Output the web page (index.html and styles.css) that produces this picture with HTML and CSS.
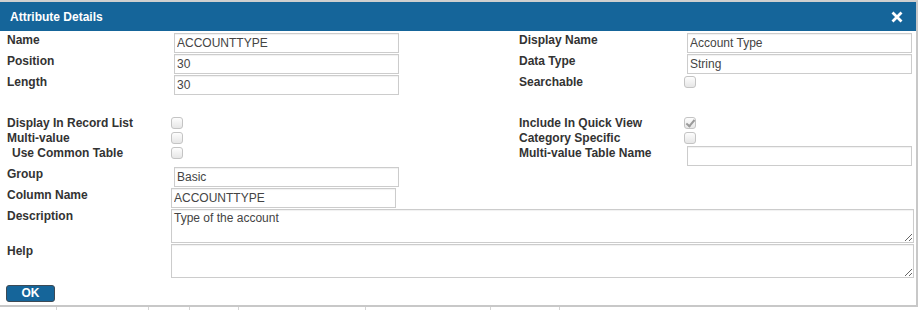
FILE: index.html
```html
<!DOCTYPE html>
<html lang="en">
<head>
  <meta charset="UTF-8">
  <meta name="viewport" content="width=device-width, initial-scale=1.0">
  <title>Attribute Details</title>
  <link rel="stylesheet" href="styles.css">
</head>
<body>

  <div class="dialog">
    <div class="dialog-header">
      <span class="dialog-title">Attribute Details</span>
      <span class="close">
        <svg width="12" height="12" viewBox="0 0 12 12">
          <path d="M1.5 1.5 L10.5 10.5 M10.5 1.5 L1.5 10.5" stroke="#fff" stroke-width="2.8" fill="none"/>
        </svg>
      </span>
    </div>

    <form class="dialog-body" onsubmit="return false">
      <div class="row">
        <label>Name</label>
        <div><input type="text" class="field" value="ACCOUNTTYPE"></div>
        <label>Display Name</label>
        <div><input type="text" class="field" value="Account Type"></div>
      </div>
      <div class="row">
        <label>Position</label>
        <div><input type="text" class="field" value="30"></div>
        <label>Data Type</label>
        <div><input type="text" class="field" value="String"></div>
      </div>
      <div class="row">
        <label>Length</label>
        <div><input type="text" class="field" value="30"></div>
        <label>Searchable</label>
        <div><input type="checkbox" class="check"></div>
      </div>

      <div class="spacer"></div>

      <div class="row short">
        <label>Display In Record List</label>
        <div><input type="checkbox" class="check"></div>
        <label>Include In Quick View</label>
        <div><input type="checkbox" class="check" checked disabled></div>
      </div>
      <div class="row short">
        <label>Multi-value</label>
        <div><input type="checkbox" class="check"></div>
        <label>Category Specific</label>
        <div><input type="checkbox" class="check"></div>
      </div>
      <div class="row">
        <label class="indent">Use Common Table</label>
        <div><input type="checkbox" class="check"></div>
        <label>Multi-value Table Name</label>
        <div><input type="text" class="field" value=""></div>
      </div>
      <div class="row">
        <label>Group</label>
        <div><input type="text" class="field" value="Basic"></div>
      </div>
      <div class="row">
        <label>Column Name</label>
        <div><input type="text" class="field flush" value="ACCOUNTTYPE"></div>
      </div>
      <div class="row tall">
        <label>Description</label>
        <div class="wide"><textarea class="area">Type of the account</textarea></div>
      </div>
      <div class="row tall">
        <label>Help</label>
        <div class="wide"><textarea class="area"></textarea></div>
      </div>

      <div class="actions">
        <button type="submit" class="btn">OK</button>
      </div>
    </form>
  </div>

  <!-- grid of the list behind the dialog -->
  <div class="behind">
    <span style="width:57px"></span>
    <span style="width:92px"></span>
    <span style="width:41px"></span>
    <span style="width:49px"></span>
    <span style="width:127px"></span>
    <span style="width:125px"></span>
    <span style="width:69px"></span>
  </div>

</body>
</html>
```

FILE: styles.css
```css
body {
  font-family: "Liberation Sans", Arial, sans-serif;
  background-color: #fff;
  margin: 0;
  padding: 0;
  overflow: hidden;
}
.dialog {
  width: 916px;
  border-top: 2px solid #cfcfcf;
  border-right: 2px solid #c8c8c8;
  border-bottom: 2px solid #c8c8c8;
  background-color: #fff;
}
.dialog-header {
  height: 29px;
  background-color: #15659a;
  display: flex;
  align-items: center;
  justify-content: space-between;
  padding: 0 13px 0 10px;
}
.dialog-title {
  color: #fff;
  font-size: 12px;
  font-weight: bold;
}
.close {
  display: flex;
  margin-top: 1px;
  cursor: pointer;
}
.dialog-body {
  height: 274px;
  box-sizing: border-box;
  padding: 2px 3px 0 7px;
}
.row {
  display: grid;
  grid-template-columns: 164px 348px 165px 229px;
  height: 21px;
  align-items: start;
}
.row.short {
  height: 15px;
}
.row.tall {
  height: 35px;
}
.row label {
  font-size: 12px;
  font-weight: bold;
  color: #333;
  line-height: 14px;
  white-space: nowrap;
}
.row label.indent {
  padding-left: 5px;
}
.spacer {
  height: 20px;
}
.wide {
  grid-column: 2 / 5;
}
.field {
  box-sizing: border-box;
  width: 225px;
  height: 20px;
  margin: 0 0 0 3px;
  padding: 0 2px;
  border: 1px solid #ccc;
  box-shadow: inset 0 1px 1px rgba(0, 0, 0, 0.06);
  font-family: "Liberation Sans", Arial, sans-serif;
  font-size: 12px;
  color: #444;
  outline: none;
}
.field.flush {
  margin-left: 0;
}
.area {
  display: block;
  box-sizing: border-box;
  width: 743px;
  height: 34px;
  margin: 0;
  padding: 1px 2px;
  border: 1px solid #ccc;
  box-shadow: inset 0 1px 1px rgba(0, 0, 0, 0.06);
  font-family: "Liberation Sans", Arial, sans-serif;
  font-size: 12px;
  color: #444;
  outline: none;
}
.check {
  appearance: none;
  -webkit-appearance: none;
  position: relative;
  box-sizing: border-box;
  width: 12px;
  height: 12px;
  margin: 1px 0 0 0;
  border: 1px solid #c4c4c4;
  border-radius: 3px;
  background: linear-gradient(#fdfdfd, #e6e6e6);
  display: block;
}
.check:checked::after {
  content: "";
  position: absolute;
  left: 3px;
  top: 0px;
  width: 3px;
  height: 7px;
  border: solid #9a9a9a;
  border-width: 0 2px 2px 0;
  transform: rotate(40deg);
}
.actions {
  padding-top: 4px;
}
.btn {
  width: 49px;
  height: 17px;
  margin-left: -1px;
  padding: 0;
  background-color: #15659a;
  color: #fff;
  border: 1px solid #3d4a55;
  border-radius: 3px;
  font-family: "Liberation Sans", Arial, sans-serif;
  font-size: 12px;
  font-weight: bold;
  line-height: 15px;
  cursor: pointer;
}
.btn:hover {
  background-color: #0f5480;
}
.behind {
  display: flex;
  height: 10px;
}
.behind span {
  border-right: 1px solid #d4d4d4;
  box-sizing: border-box;
  height: 10px;
}
```
